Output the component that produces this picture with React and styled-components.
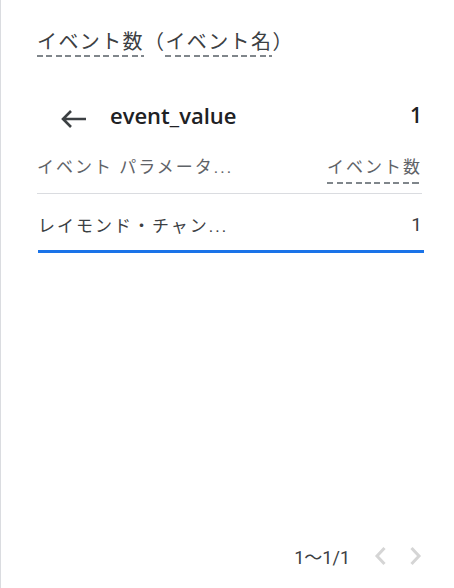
import React from "react";
import styled, { createGlobalStyle } from "styled-components";

const Global = createGlobalStyle`
  html, body { margin: 0; padding: 0; background: #ffffff; }
  body { font-family: Roboto, "Noto Sans CJK JP", sans-serif; }
`;

const Card = styled.div`
  box-sizing: border-box;
  width: 454px;
  height: 588px;
  border-left: 1px solid #dadce0;
  padding: 29px 32px 0 36px;
  display: flex;
  flex-direction: column;
  font-family: Roboto, "Noto Sans CJK JP", sans-serif;
  color: #3c4043;
`;

const Title = styled.div`
  font-size: 20px;
  line-height: 26px;
  color: #3c4043;
  letter-spacing: 1.4px;
  white-space: nowrap;
`;

const Dashed = styled.span`
  padding-bottom: ${(p) => p.$pad || "3px"};
  background-image: repeating-linear-gradient(
    to right,
    #80868b 0 6px,
    transparent 6px 9.5px
  );
  background-size: 100% 2px;
  background-position: left bottom;
  background-repeat: no-repeat;
`;

const HeaderRow = styled.div`
  display: flex;
  align-items: center;
  margin-top: 42px;
  height: 36px;
`;

const BackButton = styled.button`
  border: 0;
  background: none;
  padding: 0;
  margin: 0 21px 0 20px;
  width: 32px;
  height: 32px;
  display: flex;
  align-items: center;
  justify-content: center;
  color: #3c4043;
  cursor: pointer;
  position: relative;
  top: 4px;
`;

const HeaderName = styled.div`
  flex: 1;
  font-family: "Open Sans", Roboto, sans-serif;
  font-weight: 600;
  font-size: 22px;
  color: #202124;
`;

const HeaderValue = styled.div`
  font-family: "Open Sans", Roboto, sans-serif;
  font-weight: 600;
  font-size: 21px;
  color: #202124;
`;

const ColumnHead = styled.div`
  display: flex;
  justify-content: space-between;
  align-items: flex-start;
  margin-top: 22px;
  padding-bottom: 14px;
  border-bottom: 1px solid #dadce0;
  font-size: 17px;
  color: #5f6368;
  letter-spacing: 2px;
`;

const HeadCell = styled.span`
  white-space: nowrap;
  line-height: 24px;
`;

const DataRow = styled.div`
  box-sizing: border-box;
  display: flex;
  justify-content: space-between;
  align-items: center;
  height: 59px;
  padding-top: 5px;
  border-bottom: 3px solid #1a73e8;
  font-size: 17px;
  color: #3c4043;
  margin-right: -2px;
  padding-right: 2px;
  margin-left: 1px;
`;

const Cell = styled.span`
  white-space: nowrap;
  letter-spacing: ${(p) => (p.$num ? "0" : "2px")};
  font-size: ${(p) => (p.$num ? "19px" : "17px")};
`;

const Spacer = styled.div`
  flex: 1;
`;

const Pager = styled.div`
  display: flex;
  align-items: center;
  justify-content: flex-end;
  height: 24px;
  margin-bottom: 20px;
  margin-right: -6px;
  font-size: 18px;
  color: #3c4043;
`;

const PageText = styled.span`
  margin-right: 18px;
`;

const PageBtn = styled.button`
  border: 0;
  background: none;
  padding: 0;
  width: 24px;
  height: 24px;
  margin-left: ${(p) => p.$gap || "0"};
  display: flex;
  align-items: center;
  justify-content: center;
  color: #d5d5d5;
`;

const Arrow = () => (
  <svg width="32" height="32" viewBox="0 0 32 32" fill="none">
    <path
      d="M29 16H6M14 8l-8 8 8 8"
      stroke="#3c4043"
      strokeWidth="2.6"
      strokeLinecap="butt"
      strokeLinejoin="miter"
    />
  </svg>
);

const Chevron = ({ dir }) => (
  <svg width="14" height="20" viewBox="0 0 14 20" fill="none">
    <path
      d={dir === "left" ? "M11.5 2L4 10l7.5 8" : "M2.5 2L10 10l-7.5 8"}
      stroke="currentColor"
      strokeWidth="3"
    />
  </svg>
);

export default function App() {
  return (
    <>
      <Global />
      <Card>
        <Title>
          <Dashed>イベント数</Dashed>（<Dashed>イベント名</Dashed>）
        </Title>
        <HeaderRow>
          <BackButton aria-label="戻る">
            <Arrow />
          </BackButton>
          <HeaderName>event_value</HeaderName>
          <HeaderValue>1</HeaderValue>
        </HeaderRow>
        <ColumnHead>
          <HeadCell>イベント パラメータ...</HeadCell>
          <HeadCell>
            <Dashed $pad="7px">イベント数</Dashed>
          </HeadCell>
        </ColumnHead>
        <DataRow>
          <Cell>レイモンド・チャン...</Cell>
          <Cell $num>1</Cell>
        </DataRow>
        <Spacer />
        <Pager>
          <PageText>1〜1/1</PageText>
          <PageBtn aria-label="前へ">
            <Chevron dir="left" />
          </PageBtn>
          <PageBtn $gap="12px" aria-label="次へ">
            <Chevron dir="right" />
          </PageBtn>
        </Pager>
      </Card>
    </>
  );
}
